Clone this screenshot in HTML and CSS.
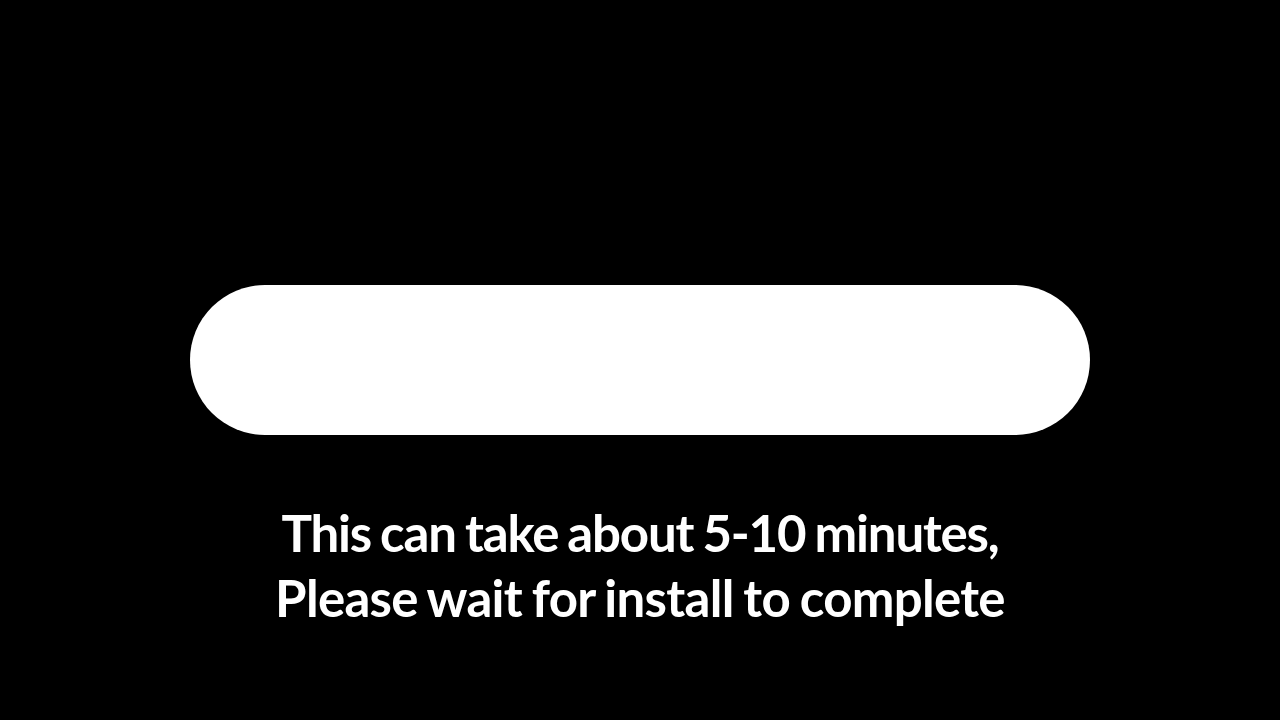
FILE: index.html
```html
<!DOCTYPE html>
<html lang="en">
<head>
<meta charset="utf-8">
<title>Installing</title>
<link rel="stylesheet" href="styles.css">
</head>
<body>
<main class="screen">
  <div class="progress-pill"></div>
  <p class="message"><span class="line">This can take about 5-10 minutes,</span><span class="line line-second">Please wait for install to complete</span></p>
</main>
</body>
</html>
```

FILE: styles.css
```css
html, body {
  margin: 0;
  padding: 0;
  background: #000;
}
.screen {
  width: 1280px;
  height: 720px;
  display: flex;
  flex-direction: column;
  align-items: center;
  padding-top: 285px;
  box-sizing: border-box;
}
.progress-pill {
  width: 900px;
  height: 150px;
  background: #fff;
  border-radius: 75px;
}
.message {
  margin: 65px 0 0 0;
  color: #fff;
  font-family: Lato, "Open Sans", sans-serif;
  font-weight: 700;
  font-size: 51px;
  line-height: 65px;
  letter-spacing: -1.2px;
  word-spacing: -2px;
  text-align: center;
}
.line {
  display: block;
}
.line-second {
  letter-spacing: -0.7px;
}
```
